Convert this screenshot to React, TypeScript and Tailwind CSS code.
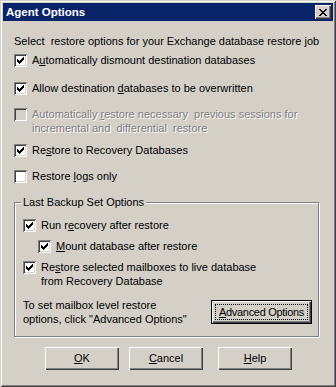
import React from "react"

const font = { fontFamily: '"Liberation Sans", Arial, sans-serif' }

function Check() {
  return (
    <svg width="7" height="7" viewBox="0 0 7 7" shapeRendering="crispEdges" className="block">
      <path
        fill="#000"
        d="M6 0h1v3h-1zM5 1h1v3h-1zM4 2h1v3h-1zM3 3h1v3h-1zM2 4h1v3h-1zM1 3h1v3h-1zM0 2h1v3h-1z"
      />
    </svg>
  )
}

function Box({ checked, disabled }: { checked?: boolean; disabled?: boolean }) {
  return (
    <div
      className={`w-[13px] h-[13px] shrink-0 flex items-center justify-center shadow-[inset_1px_1px_0_#808080,inset_-1px_-1px_0_#ffffff,inset_2px_2px_0_#404040,inset_-2px_-2px_0_#d4d0c8] ${
        disabled ? "bg-[#d4d0c8]" : "bg-white"
      }`}
    >
      {checked && <Check />}
    </div>
  )
}

function Option({
  checked,
  disabled,
  children,
  className = "",
}: {
  checked?: boolean
  disabled?: boolean
  children: React.ReactNode
  className?: string
}) {
  return (
    <div className={`flex items-start gap-[5px] ${className}`}>
      <div className="pt-[1px]">
        <Box checked={checked} disabled={disabled} />
      </div>
      <div
        className={`leading-[14px] ${
          disabled ? "text-[#808080] [text-shadow:1px_1px_0_#ffffff]" : "text-black"
        }`}
      >
        {children}
      </div>
    </div>
  )
}

function Button({
  children,
  className = "",
  isDefault,
}: {
  children: React.ReactNode
  className?: string
  isDefault?: boolean
}) {
  if (isDefault) {
    return (
      <div className={`border border-black ${className}`}>
        <div className="h-full bg-[#d4d0c8] p-[3px] shadow-[inset_1px_1px_0_#ffffff,inset_-1px_-1px_0_#404040,inset_-2px_-2px_0_#808080]">
          <div className="h-full border border-dotted border-black flex items-center justify-center">
            {children}
          </div>
        </div>
      </div>
    )
  }
  return (
    <div
      className={`bg-[#d4d0c8] flex items-center justify-center shadow-[inset_1px_1px_0_#ffffff,inset_-1px_-1px_0_#404040,inset_-2px_-2px_0_#808080] ${className}`}
    >
      {children}
    </div>
  )
}

export default function App() {
  return (
    <div
      style={font}
      className="w-[336px] h-[387px] bg-[#d4d0c8] p-[3px] text-[11px] shadow-[inset_1px_1px_0_#d4d0c8,inset_-1px_-1px_0_#404040,inset_2px_2px_0_#ffffff,inset_-2px_-2px_0_#808080] flex flex-col"
    >
      {/* Title bar */}
      <div className="h-[18px] bg-[#0a246a] flex items-center justify-between pl-[3px] pr-[2px]">
        <span className="text-white font-bold text-[11.5px] leading-[14px]">Agent Options</span>
        <div className="w-[16px] h-[14px] bg-[#d4d0c8] flex items-center justify-center shadow-[inset_1px_1px_0_#ffffff,inset_-1px_-1px_0_#404040,inset_-2px_-2px_0_#808080]">
          <svg width="8" height="7" viewBox="0 0 8 7" shapeRendering="crispEdges">
            <path
              fill="#000"
              d="M0 0h2v1h-2zM6 0h2v1h-2zM1 1h2v1h-2zM5 1h2v1h-2zM2 2h4v1h-4zM3 3h2v1h-2zM2 4h4v1h-4zM1 5h2v1h-2zM5 5h2v1h-2zM0 6h2v1h-2zM6 6h2v1h-2z"
            />
          </svg>
        </div>
      </div>

      {/* Body */}
      <div className="flex flex-col pl-[11px] pr-[13px]">
        <div className="mt-[14px] leading-[13px]">
          Select&nbsp; restore options for your Exchange database restore job
        </div>

        <Option checked className="mt-[5px]">
          A<u>u</u>tomatically dismount destination databases
        </Option>
        <Option checked className="mt-[14px]">
          Allow destination <u>d</u>atabases to be overwritten
        </Option>
        <Option disabled className="mt-[12px]">
          Automatically <u>r</u>estore necessary&nbsp; previous sessions for
          <br />
          incremental and&nbsp; differential&nbsp; restore
        </Option>
        <Option checked className="mt-[8px]">
          Re<u>s</u>tore to Recovery Databases
        </Option>
        <Option className="mt-[12px]">
          Restore <u>l</u>ogs only
        </Option>

        {/* Group box */}
        <div className="relative mt-[19px] w-[305px] h-[135px] border border-[#808080] shadow-[1px_1px_0_#ffffff,inset_1px_1px_0_#ffffff] pl-[8px] pt-[15px]">
          <span className="absolute -top-[7px] left-[6px] px-[2px] bg-[#d4d0c8] leading-[13px]">
            Last Backup Set Options
          </span>
          <Option checked>
            Run r<u>e</u>covery after restore
          </Option>
          <Option checked className="ml-[15px] mt-[7px]">
            <u>M</u>ount database after restore
          </Option>
          <Option checked className="mt-[7px]">
            Re<u>s</u>tore selected mailboxes to live database
            <br />
            from Recovery Database
          </Option>
          <div className="flex items-center justify-between mt-[10px] pr-[6px]">
            <div className="leading-[14px]">
              To set mailbox level restore
              <br />
              options, click "Advanced Options"
            </div>
            <Button isDefault className="w-[101px] h-[24px]">
              <span className="tracking-[-0.3px] whitespace-nowrap">
                <u>A</u>dvanced Options
              </span>
            </Button>
          </div>
        </div>

        {/* Buttons */}
        <div className="flex mt-[10px] pl-[31px] gap-[10px]">
          <Button className="w-[74px] h-[23px]">
            <span>
              <u>O</u>K
            </span>
          </Button>
          <Button className="w-[74px] h-[23px]">
            <span>
              <u>C</u>ancel
            </span>
          </Button>
          <Button className="w-[74px] h-[23px] ml-[5px]">
            <span>
              <u>H</u>elp
            </span>
          </Button>
        </div>
      </div>
    </div>
  )
}
